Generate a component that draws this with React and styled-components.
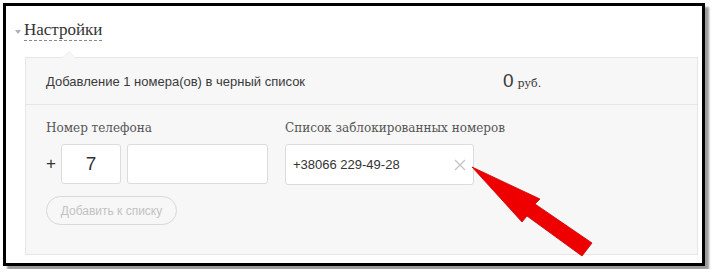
import styled, { createGlobalStyle } from "styled-components";

const GlobalStyle = createGlobalStyle`
  body {
    margin: 0;
    background: #ffffff;
    font-family: "Liberation Sans", Arial, sans-serif;
  }
`;

const App = () => {
  return (
    <>
      <GlobalStyle />
      <Frame>
        <Header>
          <Caret />
          <Title>Настройки</Title>
        </Header>
        <Panel>
          <SummaryRow>
            <SummaryText>Добавление 1 номера(ов) в черный список</SummaryText>
            <Price>
              <PriceValue>0</PriceValue>
              <Currency>руб.</Currency>
            </Price>
          </SummaryRow>
          <FormBody>
            <Column>
              <Label>Номер телефона</Label>
              <PhoneRow>
                <Plus>+</Plus>
                <Field width="60px" center>7</Field>
                <Field width="141px" />
              </PhoneRow>
              <AddButton>Добавить к списку</AddButton>
            </Column>
            <Column>
              <Label>Список заблокированных номеров</Label>
              <BlockedItem>
                <span>+38066 229-49-28</span>
                <RemoveIcon viewBox="0 0 12 12">
                  <path d="M1 1 L11 11 M11 1 L1 11" />
                </RemoveIcon>
              </BlockedItem>
            </Column>
          </FormBody>
        </Panel>
        {/* стрелка-указатель поверх панели */}
        <Arrow viewBox="0 0 713 274">
          <polygon points="472,167 540,199 535,204 592,243 582,256 527,216 522,222" />
        </Arrow>
      </Frame>
    </>
  );
};

const Frame = styled.div`
  position: relative;
  box-sizing: border-box;
  width: 702px;
  height: 263px;
  margin: 3px;
  padding: 0 4px 8px 9px;
  background: #ffffff;
  border: 3px solid #000000;
  box-shadow: 4px 4px 2px #9a9a9a;
  display: flex;
  flex-direction: column;
`;

const Header = styled.div`
  display: flex;
  align-items: flex-start;
  gap: 3px;
  height: 51px;
  padding-top: 14px;
  box-sizing: border-box;
`;

const Caret = styled.span`
  width: 0;
  height: 0;
  border-left: 3px solid transparent;
  border-right: 3px solid transparent;
  border-top: 4px solid #b0b0b0;
  margin-top: 10px;
`;

const Title = styled.span`
  font-family: "Liberation Serif", "DejaVu Serif", serif;
  font-size: 17px;
  line-height: 20px;
  color: #333333;
  border-bottom: 1px dashed #8a8a8a;
`;

const Panel = styled.div`
  position: relative;
  flex: 1;
  margin-left: 10px;
  background: #f7f7f7;
  border: 1px solid #e6e6e6;

  &::before {
    content: "";
    position: absolute;
    top: -7px;
    left: 36px;
    border-left: 7px solid transparent;
    border-right: 7px solid transparent;
    border-bottom: 7px solid #ececec;
  }
  &::after {
    content: "";
    position: absolute;
    top: -6px;
    left: 37px;
    border-left: 6px solid transparent;
    border-right: 6px solid transparent;
    border-bottom: 6px solid #f7f7f7;
  }
`;

const SummaryRow = styled.div`
  display: grid;
  grid-template-columns: 457px auto;
  align-items: center;
  height: 46px;
  padding-left: 20px;
  border-bottom: 1px solid #e6e6e6;
`;

const SummaryText = styled.span`
  font-size: 13px;
  color: #3a3a3a;
`;

const Price = styled.span`
  display: flex;
  align-items: baseline;
  gap: 4px;
  color: #3a3a3a;
`;

const PriceValue = styled.span`
  font-size: 19px;
`;

const Currency = styled.span`
  font-family: "DejaVu Serif", "Liberation Serif", serif;
  font-size: 11px;
`;

const FormBody = styled.div`
  display: grid;
  grid-template-columns: 239px auto;
  padding: 15px 20px 0;
`;

const Column = styled.div`
  display: flex;
  flex-direction: column;
  align-items: flex-start;
`;

const Label = styled.div`
  font-family: "DejaVu Serif", "Liberation Serif", serif;
  font-size: 12px;
  line-height: 16px;
  color: #555555;
  margin-bottom: 8px;
`;

const PhoneRow = styled.div`
  display: flex;
  align-items: center;
  gap: 6px;
`;

const Plus = styled.span`
  width: 9px;
  font-size: 17px;
  color: #333333;
`;

const Field = styled.div`
  box-sizing: border-box;
  width: ${(props) => props.width};
  height: 40px;
  display: flex;
  align-items: center;
  justify-content: ${(props) => (props.center ? "center" : "flex-start")};
  background: #ffffff;
  border: 1px solid #dcdcdc;
  border-radius: 3px;
  font-size: 19px;
  color: #333333;
`;

const AddButton = styled.div`
  box-sizing: border-box;
  margin-top: 12px;
  width: 131px;
  height: 29px;
  display: flex;
  align-items: center;
  justify-content: center;
  border: 1px solid #d8d8d8;
  border-radius: 15px;
  font-size: 12px;
  color: #c2c2c2;
`;

const BlockedItem = styled.div`
  box-sizing: border-box;
  width: 189px;
  height: 41px;
  display: flex;
  align-items: center;
  justify-content: space-between;
  padding: 0 7px 0 7px;
  background: #ffffff;
  border: 1px solid #dcdcdc;
  border-radius: 3px;
  font-size: 13px;
  color: #333333;
`;

const RemoveIcon = styled.svg`
  width: 12px;
  height: 12px;
  fill: none;
  stroke: #c4c4c4;
  stroke-width: 1.3;
`;

const Arrow = styled.svg`
  position: absolute;
  left: -6px;
  top: -6px;
  width: 713px;
  height: 274px;
  pointer-events: none;

  polygon {
    fill: #ee0000;
    stroke: #c80000;
    stroke-width: 0.8;
  }
`;

export default App;
